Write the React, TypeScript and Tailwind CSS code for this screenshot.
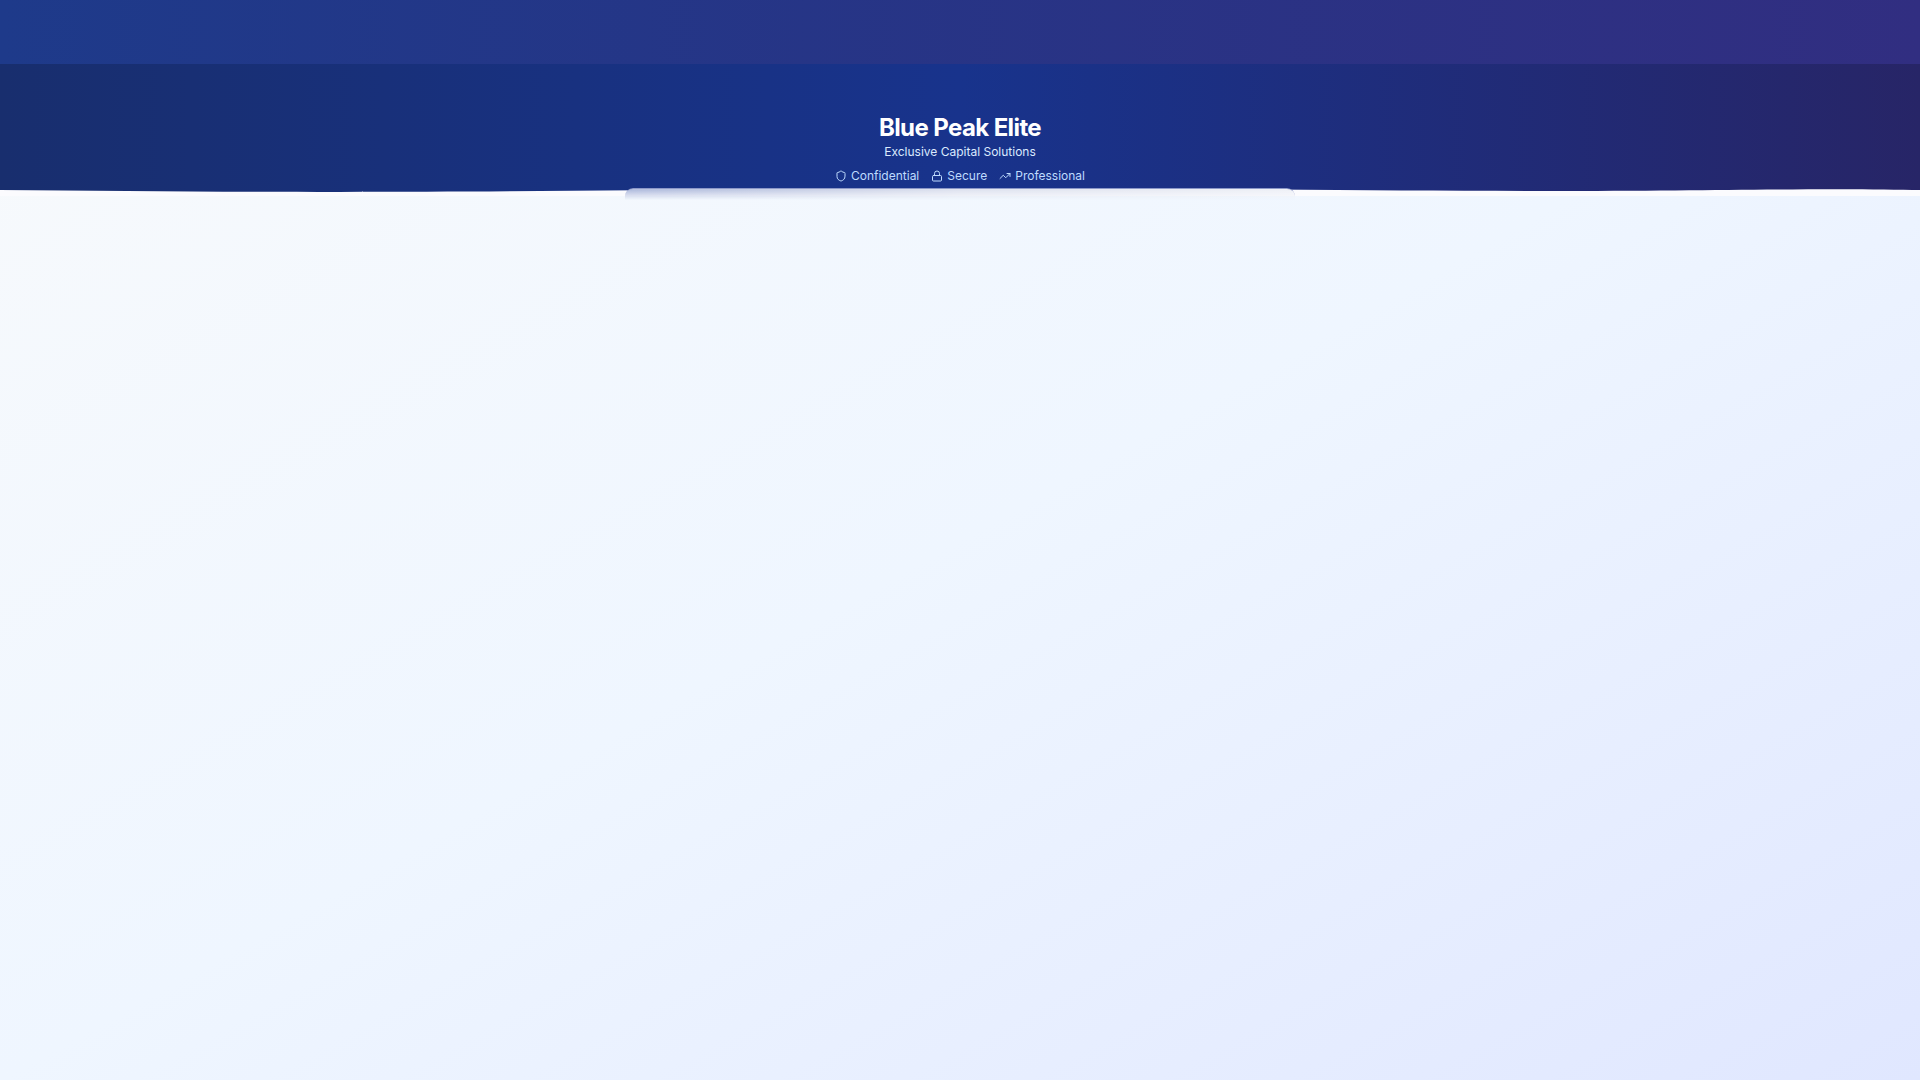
import { Lock, Shield, TrendingUp } from "lucide-react";

const badges = [
  { icon: Shield, label: "Confidential" },
  { icon: Lock, label: "Secure" },
  { icon: TrendingUp, label: "Professional" },
];

function Wave() {
  return (
    <svg
      className="absolute bottom-0 left-0 h-2 w-full text-[#fbfbfe]"
      viewBox="0 0 1920 8"
      preserveAspectRatio="none"
      aria-hidden="true"
    >
      <path
        fill="currentColor"
        d="M0 2C110 3 220 3.9 340 3.9C560 3.9 740 0.6 960 0.4C1200 0.2 1370 2.9 1540 2.9C1680 2.9 1740 1.2 1840 1.2C1870 1.2 1900 1.7 1920 2V8H0Z"
      />
    </svg>
  );
}

function Hero() {
  return (
    <header className="relative bg-linear-to-r/srgb from-[#182e6e] via-[#18338c] to-[#272567] pt-12 pb-3 text-center">
      <h1 className="text-2xl leading-8 font-bold tracking-tight text-white">
        Blue Peak Elite
      </h1>
      <p className="text-xs leading-4 text-[#dbeafe]">
        Exclusive Capital Solutions
      </p>
      <ul className="mt-2 flex justify-center gap-3 text-xs leading-4 text-[#bfdbfe]">
        {badges.map(({ icon: Icon, label }) => (
          <li key={label} className="flex items-center gap-1">
            <Icon className="size-3" />
            <span>{label}</span>
          </li>
        ))}
      </ul>
      <Wave />
    </header>
  );
}

export default function App() {
  return (
    <div className="flex min-h-screen flex-col bg-linear-to-br/srgb from-[#f8fafc] via-[#eff6ff] to-[#e0e7ff] font-[Inter,sans-serif]">
      <div className="h-16 bg-linear-to-r/srgb from-[#1e3a8a] to-[#312e81]" />
      <Hero />
      {/* Frosted panel tucked under the hero */}
      <main className="relative mx-auto -mt-2 w-full max-w-2xl flex-1 px-px">
        <div className="h-3 rounded-t-lg border-t border-[#8c98c8] bg-linear-to-r/srgb from-[#b4bfdf] via-[#e0e4f0] to-[#eff1f7] mask-b-from-20% mask-b-to-100%" />
      </main>
    </div>
  );
}
